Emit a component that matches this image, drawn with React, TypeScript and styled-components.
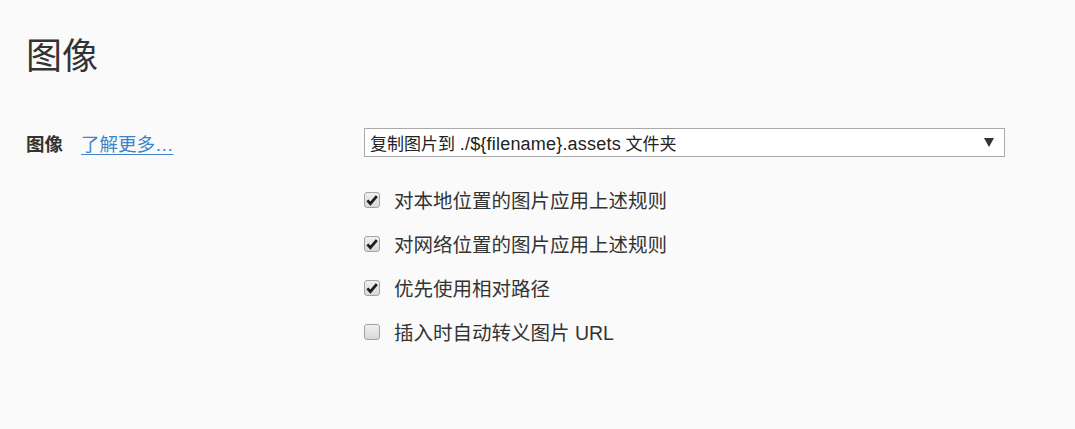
import styled, { createGlobalStyle } from "styled-components";

const FONT = `"Liberation Sans", "Noto Sans CJK SC", sans-serif`;

const GlobalStyle = createGlobalStyle`
  html, body {
    margin: 0;
    padding: 0;
    background: #fafafa;
  }
  body {
    font-family: ${FONT};
    color: #333;
  }
`;

const OPTIONS = [
  { label: "对本地位置的图片应用上述规则", checked: true },
  { label: "对网络位置的图片应用上述规则", checked: true },
  { label: "优先使用相对路径", checked: true },
  { label: "插入时自动转义图片 URL", checked: false },
];

export default function App() {
  return (
    <>
      <GlobalStyle />
      <PageStyled>
        <TitleStyled>图像</TitleStyled>
        <SectionStyled>
          <LabelCellStyled>
            <LabelStyled>图像</LabelStyled>
            <LinkStyled href="#">了解更多…</LinkStyled>
          </LabelCellStyled>
          <ControlsStyled>
            <SelectStyled>
              <span>
                复制图片到 <LatinStyled>./${"{filename}"}.assets</LatinStyled> 文件夹
              </span>
              <CaretStyled />
            </SelectStyled>
            <OptionsStyled>
              {OPTIONS.map((o) => (
                <OptionStyled key={o.label}>
                  <CheckboxStyled>
                    {o.checked && (
                      <svg width="12" height="12" viewBox="0 0 12 12">
                        <path
                          d="M1.4 6.4 L4.4 9.6 L10.8 2.2"
                          fill="none"
                          stroke="#1f1f1f"
                          strokeWidth="2.8"
                        />
                      </svg>
                    )}
                  </CheckboxStyled>
                  <OptionTextStyled>{o.label}</OptionTextStyled>
                </OptionStyled>
              ))}
            </OptionsStyled>
          </ControlsStyled>
        </SectionStyled>
      </PageStyled>
    </>
  );
}

const PageStyled = styled.div`
  padding: 32px 0 0 26px;
`;

const TitleStyled = styled.h1`
  margin: 0;
  font-family: ${FONT};
  font-size: 36px;
  font-weight: 400;
  line-height: 50px;
  color: #333;
`;

const SectionStyled = styled.div`
  display: grid;
  grid-template-columns: 338px 641px;
  margin-top: 46px;
`;

const LabelCellStyled = styled.div`
  display: flex;
  align-items: center;
  column-gap: 18px;
  height: 30px;
`;

const LabelStyled = styled.span`
  font-size: 18.5px;
  font-weight: 700;
  color: #333;
`;

const LinkStyled = styled.a`
  font-size: 18.5px;
  color: #4183c4;
  text-decoration: underline;
  text-underline-offset: 3px;
`;

const ControlsStyled = styled.div`
  display: flex;
  flex-direction: column;
`;

const SelectStyled = styled.div`
  display: flex;
  align-items: center;
  justify-content: space-between;
  box-sizing: border-box;
  height: 29px;
  padding: 0 10px 0 5px;
  border: 1px solid #a9a9a9;
  background: #fff;
  font-size: 17px;
  color: #222;
  white-space: pre;
`;

const LatinStyled = styled.span`
  font-size: 18px;
  letter-spacing: 0.2px;
`;

const CaretStyled = styled.span`
  width: 0;
  height: 0;
  border-left: 5px solid transparent;
  border-right: 5px solid transparent;
  border-top: 9px solid #333;
`;

const OptionsStyled = styled.div`
  display: flex;
  flex-direction: column;
  row-gap: 15px;
  margin-top: 28px;
`;

const OptionStyled = styled.label`
  display: flex;
  align-items: center;
  column-gap: 14px;
  height: 29px;
`;

const CheckboxStyled = styled.span`
  display: flex;
  align-items: center;
  justify-content: center;
  box-sizing: border-box;
  width: 16px;
  height: 16px;
  border: 1px solid #a3a3a3;
  border-radius: 3px;
  background: linear-gradient(#f0f0f0, #d8d8d8);
`;

const OptionTextStyled = styled.span`
  font-size: 19.5px;
  color: #333;
`;
